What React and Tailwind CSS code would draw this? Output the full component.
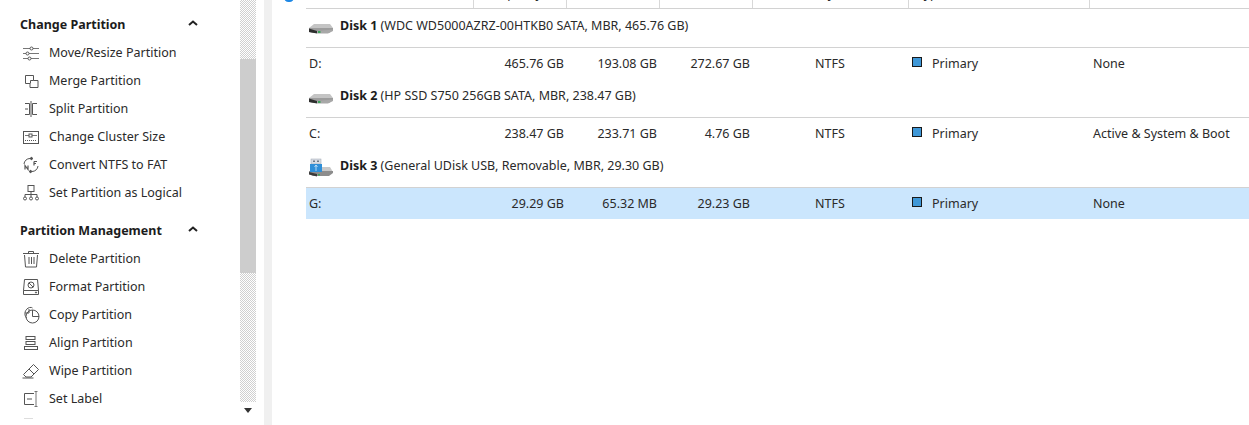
const S = "#555";

function Ico({ children }) {
  return (
    <svg width="18" height="18" viewBox="0 0 18 18" fill="none" stroke={S} strokeWidth="1" className="shrink-0">
      {children}
    </svg>
  );
}

const icons = {
  move: (
    <Ico>
      <path d="M1 4.5h7M11 4.5h6M1 9.500h3M7 9.500h10M1 14.500h5M9 14.500h8" stroke="#777" />
      <circle cx="9.500" cy="4.500" r="1.500" />
      <circle cx="5.500" cy="9.500" r="1.500" />
      <circle cx="7.500" cy="14.500" r="1.500" />
    </Ico>
  ),
  merge: (
    <Ico>
      <path d="M3.500 3.500h8v5h4.500v7h-8v-4h-4.500z" />
      <path d="M11.500 8.500h-3v3" />
    </Ico>
  ),
  split: (
    <Ico>
      <path d="M3 3.500h4.500v11h-4.500M3 9h3M15 3.500h-4.500v11h4.500M9 1v16" />
    </Ico>
  ),
  cluster: (
    <Ico>
      <rect x="1.500" y="3.500" width="15" height="12" />
      <path d="M3 7.500h4M10 7.500h5" stroke="#777" />
      <rect x="7" y="6" width="3" height="3" />
      <path d="M3 12.500h12" strokeDasharray="1 1" />
    </Ico>
  ),
  convert: (
    <svg width="18" height="18" viewBox="0 0 18 18" fill="none" stroke={S} strokeWidth="1" className="shrink-0">
      <path d="M2 8a6 6 0 0 1 6-5.500h2" />
      <path d="M9 1l2 1.500-2 1.500z" fill={S} />
      <path d="M16 10a6 6 0 0 1-6 5.500h-2" />
      <path d="M9 17l-2-1.500 2-1.500z" fill={S} />
      <path d="M12 5.500v4M12 5.500h3M12 7.500h2" strokeWidth="1.200" />
      <path d="M3 13.500v-4l3 4v-4" strokeWidth="1.200" />
    </svg>
  ),
  logical: (
    <Ico>
      <rect x="6" y="1.500" width="6" height="6" />
      <path d="M9 7.500v3M3 13v-2.500h12v2.500M9 10.500v2.500" />
      <circle cx="3" cy="14.500" r="1.500" />
      <circle cx="9" cy="14.500" r="1.500" />
      <circle cx="15" cy="14.500" r="1.500" />
    </Ico>
  ),
  del: (
    <Ico>
      <path d="M1 3.500h16M6.500 3.500v-2h5v2" />
      <path d="M2.500 5l1 12h11l1-12" />
      <path d="M7 7v7M9.500 7v7M12 7v7" />
    </Ico>
  ),
  format: (
    <Ico>
      <path d="M2.500 1.500h13l1 11v4h-15v-4z" />
      <path d="M1.500 12.500h15" />
      <circle cx="9" cy="7" r="3" />
      <path d="M7 5l4 4" />
      <circle cx="14" cy="14.500" r=".6" fill={S} />
    </Ico>
  ),
  copy: (
    <Ico>
      <circle cx="10.500" cy="10.500" r="6.500" />
      <path d="M10.500 4v6.500H17" />
      <path d="M4.500 12a6.500 6.500 0 0 1 3-10.500c1.500-.3 2.500 0 3 .5" />
      <path d="M3 7h4V3" />
    </Ico>
  ),
  align: (
    <Ico>
      <rect x="4" y="2.500" width="9" height="3" />
      <rect x="4" y="7.500" width="9" height="3" />
      <rect x="2.500" y="12.500" width="13" height="3" />
    </Ico>
  ),
  wipe: (
    <Ico>
      <path d="M11.500 2.500l5 5-7.500 7.500h-5l-2.500-2.500z" />
      <path d="M7 7l5 5M0.500 16h11" />
    </Ico>
  ),
  label: (
    <Ico>
      <path d="M12 3.500H2.500v11H12" />
      <path d="M5 9h5" />
      <path d="M12.500 1.500h3M12.500 16.500h3M14 1.500v15" stroke="#777" />
    </Ico>
  ),
};

function Chevron() {
  return (
    <svg width="10" height="6" viewBox="0 0 10 6" fill="none" stroke="#222" strokeWidth="2" className="mr-[42px] mt-[-4px]">
      <path d="M1 5l4-3.500 4 3.500" />
    </svg>
  );
}

function Group({ title, items, className }) {
  return (
    <div className={className}>
      <div className="flex h-[28px] items-center justify-between pl-[20px]">
        <span className="font-bold text-[#1c1c1c]">{title}</span>
        <Chevron />
      </div>
      {items.map(([icon, label]) => (
        <div key={label} className="flex h-[28px] items-center gap-[17px] pl-[22px]">
          <div className="flex w-[18px] justify-center">{icons[icon]}</div>
          <span className="ml-[-8px] pl-[0px]">{label}</span>
        </div>
      ))}
    </div>
  );
}

function HddIcon() {
  return (
    <svg width="26" height="14" viewBox="0 0 26 14" className="shrink-0">
      <path d="M1 7L6 3h16l3 4z" fill="#c4c4c4" />
      <path d="M1 7h24v2l-4 3H5l-4-1z" fill="#9c9c9c" />
      <path d="M1 7.500l8 2.500v2.500l-8-1.500z" fill="#2e2e2e" />
      <path d="M9 10l16-1.500V10l-5 2.500H9z" fill="#a8a8a8" />
      <rect x="10" y="10" width="2.500" height="2" fill="#3da15a" />
    </svg>
  );
}

function UsbIcon() {
  return (
    <svg width="26" height="20" viewBox="0 0 26 20" className="shrink-0">
      <path d="M3 11L7 9h15l3 5H3z" fill="#c8c8c8" />
      <path d="M1 13h24v2l-4 3H5l-4-2z" fill="#8d8d8d" />
      <path d="M1 14l8 2v2.500l-8-2z" fill="#3a3a3a" />
      <rect x="10" y="16" width="2" height="1.500" fill="#3da15a" />
      <rect x="3" y="1" width="10" height="5" fill="#d8dde4" stroke="#9aa5b1" strokeWidth=".5" />
      <rect x="5" y="2.500" width="2" height="1.500" fill="#6c7885" />
      <rect x="9" y="2.500" width="2" height="1.500" fill="#6c7885" />
      <rect x="2" y="6" width="12" height="8" fill="#2f8fd8" />
      <path d="M8 7v6M6.500 9l1.500-2 1.500 2" stroke="#cfe8fb" strokeWidth=".8" fill="none" />
    </svg>
  );
}

const COLS = "grid grid-cols-[167px_93px_93px_93px_156px_181px_1fr]";

function Disk({ icon, name, info }) {
  return (
    <div className="flex h-[39px] items-center gap-[7px] border-b border-[#d2d2d2] pl-[3px]">
      <div className="flex w-[24px] justify-center">{icon}</div>
      <div className="pt-[5px] pb-[10px] pl-[0px]">
        <span className="font-bold text-[#1c1c1c]">{name}</span> <span>{info}</span>
      </div>
    </div>
  );
}

function Row({ cells, selected }) {
  const [a, b, c, d, fs, st] = cells;
  return (
    <div className={`${COLS} h-[31px] items-center ${selected ? "bg-[#cbe6fd]" : ""}`}>
      <div className="pl-[3px]">{a}</div>
      <div className="pr-[2px] text-right">{b}</div>
      <div className="pr-[2px] text-right">{c}</div>
      <div className="pr-[2px] text-right">{d}</div>
      <div className="text-center">{fs}</div>
      <div className="flex items-center gap-[10px] pl-[4px]">
        <span className="mt-[-3px] h-[10px] w-[10px] border border-[#1a1a1a] bg-[#3f98d8]" />
        <span>Primary</span>
      </div>
      <div className="pl-[4px]">{st}</div>
    </div>
  );
}

export default function App() {
  return (
    <div className="flex h-[425px] w-[1249px] overflow-hidden bg-white text-[12.5px] leading-[18px] text-[#2a2a2a]" style={{ fontFamily: '"Noto Sans", sans-serif' }}>
      <aside className="w-[240px] shrink-0 pt-[11px]">
        <Group
          title="Change Partition"
          items={[
            ["move", "Move/Resize Partition"],
            ["merge", "Merge Partition"],
            ["split", "Split Partition"],
            ["cluster", "Change Cluster Size"],
            ["convert", "Convert NTFS to FAT"],
            ["logical", "Set Partition as Logical"],
          ]}
        />
        <Group
          className="mt-[10px]"
          title="Partition Management"
          items={[
            ["del", "Delete Partition"],
            ["format", "Format Partition"],
            ["copy", "Copy Partition"],
            ["align", "Align Partition"],
            ["wipe", "Wipe Partition"],
            ["label", "Set Label"],
          ]}
        />
        <div className="ml-[24px] mt-[5px] h-[1px] w-[9px] bg-[#ddd]" />
      </aside>

      <div className="flex w-[16px] shrink-0 flex-col">
        <div className="h-[59px] bg-[repeating-conic-gradient(#d0d0d0_0_25%,#fff_0_50%)] bg-[length:2px_2px]" />
        <div className="h-[214px] bg-[#cdcdcd]" />
        <div className="h-[129px] bg-[repeating-conic-gradient(#d0d0d0_0_25%,#fff_0_50%)] bg-[length:2px_2px]" />
        <div className="flex flex-1 justify-center pt-[6px]">
          <svg width="8" height="5" viewBox="0 0 8 5"><path d="M0 0h8L4 5z" fill="#333" /></svg>
        </div>
      </div>

      <div className="w-[8px] shrink-0" />
      <div className="w-[8px] shrink-0 bg-[#f0f0f0]" />

      <main className="min-w-0 flex-1">
        <div className="flex h-[9px]">
          <div className="w-[34px] shrink-0 pl-[12px]">
            <div className="mt-[-7px] h-[9px] w-[10px] rounded-full bg-[#1e88e5]" />
          </div>
          <div className={`${COLS} flex-1 border-b border-[#d2d2d2] overflow-hidden`}>
            <div />
            <div className="mt-[-15px] border-l border-[#d8d8d8] pr-[24px] text-right">Capacity</div>
            <div className="mt-[-15px] border-l border-[#d8d8d8] pr-[2px] text-right">Used</div>
            <div className="mt-[-15px] border-l border-[#d8d8d8] pr-[2px] text-right">Unused</div>
            <div className="mt-[-15px] border-l border-[#d8d8d8] text-center">File System</div>
            <div className="mt-[-15px] border-l border-[#d8d8d8] pl-[8px]">Type</div>
            <div className="mt-[-15px] border-l border-[#d8d8d8] pl-[4px]">Status</div>
          </div>
        </div>

        <div className="ml-[34px]">
          <Disk icon={<HddIcon />} name="Disk 1" info="(WDC WD5000AZRZ-00HTKB0 SATA, MBR, 465.76 GB)" />
          <Row cells={["D:", "465.76 GB", "193.08 GB", "272.67 GB", "NTFS", "None"]} />
          <Disk icon={<HddIcon />} name="Disk 2" info="(HP SSD S750 256GB SATA, MBR, 238.47 GB)" />
          <Row cells={["C:", "238.47 GB", "233.71 GB", "4.76 GB", "NTFS", "Active & System & Boot"]} />
          <Disk icon={<UsbIcon />} name="Disk 3" info="(General UDisk USB, Removable, MBR, 29.30 GB)" />
          <Row selected cells={["G:", "29.29 GB", "65.32 MB", "29.23 GB", "NTFS", "None"]} />
        </div>
      </main>
    </div>
  );
}
